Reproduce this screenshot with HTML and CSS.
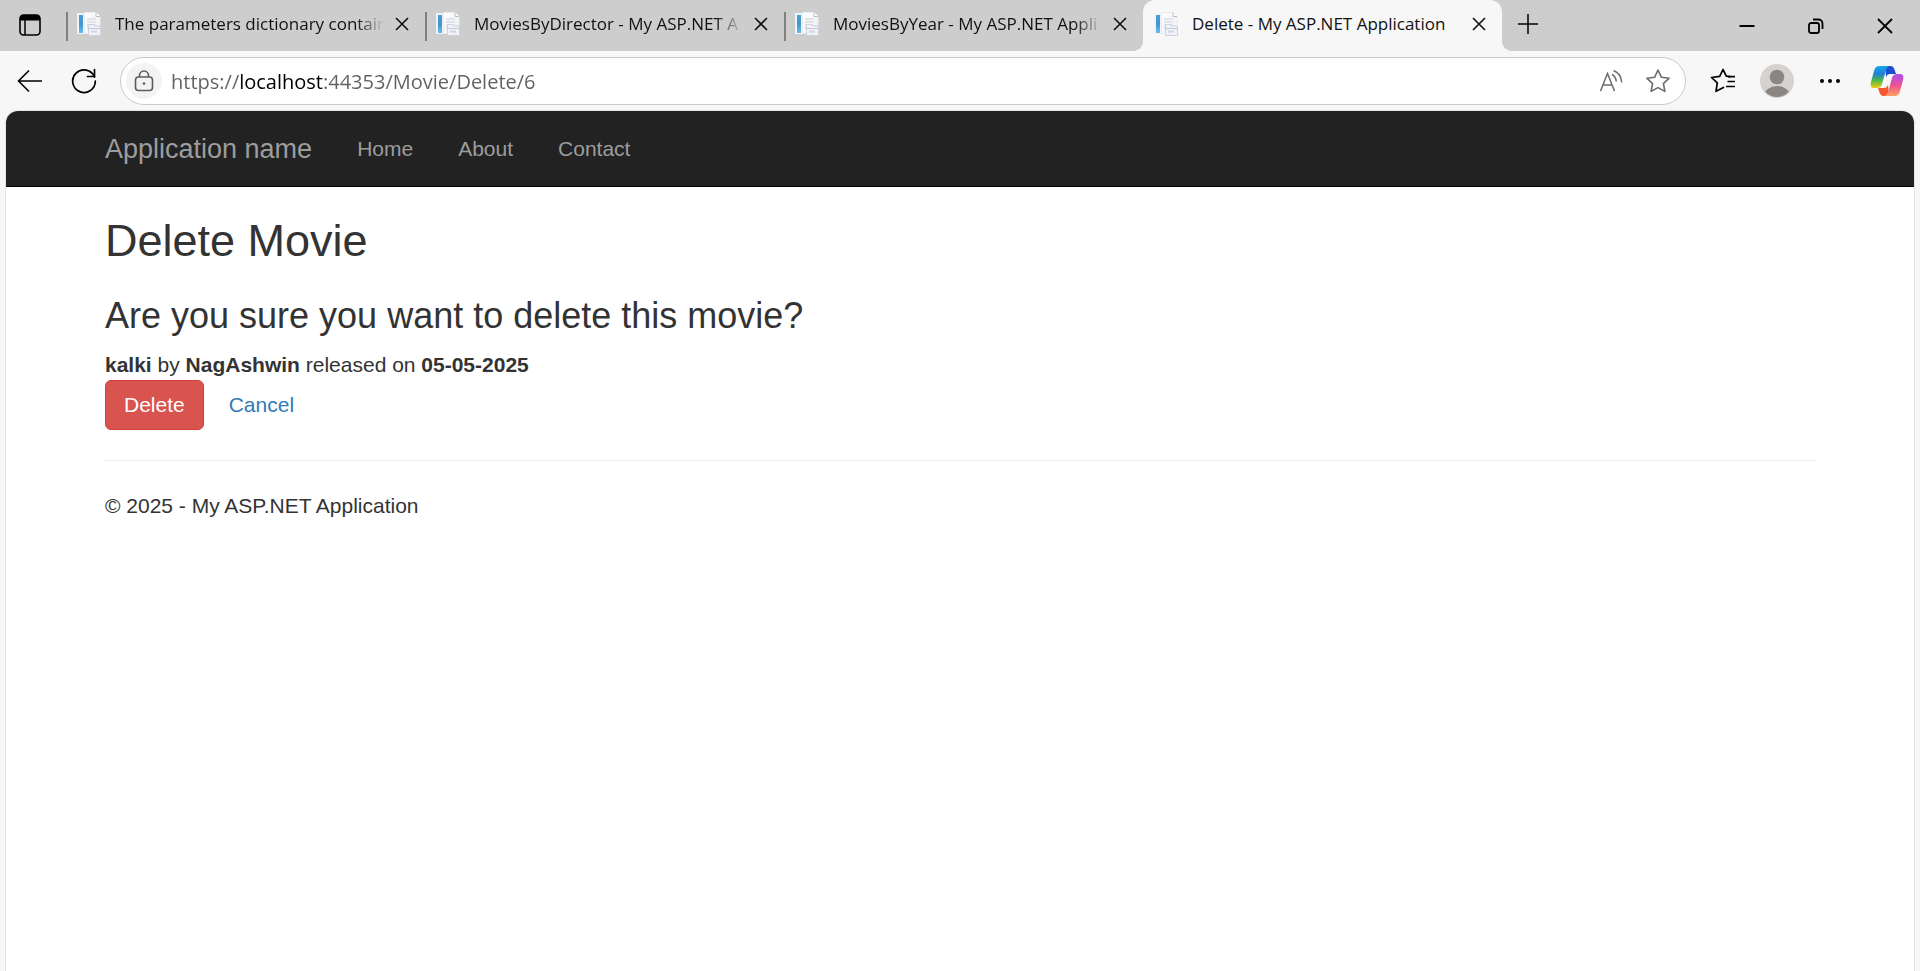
FILE: index.html
```html
<!DOCTYPE html>
<html lang="en">
<head>
<meta charset="utf-8">
<title>Delete - My ASP.NET Application</title>
<link rel="stylesheet" href="styles.css">
</head>
<body>
<svg class="defs" width="0" height="0" aria-hidden="true">
  <defs>
    <linearGradient id="blue" x1="0" y1="0" x2="0" y2="1"><stop offset="0" stop-color="#4a9fd4"/><stop offset=".5" stop-color="#3d97d0"/><stop offset="1" stop-color="#6cbcec"/></linearGradient>
    <linearGradient id="paper" x1="0" y1="0" x2="1" y2="1"><stop offset="0" stop-color="#ffffff"/><stop offset="1" stop-color="#eceef4"/></linearGradient>
    <symbol id="favicon" viewBox="0 0 24 24">
      <path d="M0 1h8v21H0z" fill="#f1f4f6"/>
      <path d="M2 3h4v18H2z" fill="url(#blue)"/>
      <path d="M7.500 .5H19l4 4V21.500H7.500z" fill="url(#paper)" stroke="#e9ebee"/>
      <path d="M19 .5V4.500h4" fill="#fff" stroke="#b9bcc2"/>
      <path d="M10 6h9v11h-9z" fill="#e0e3ea"/>
      <path d="M10 8.500h9M10 11.500h9" stroke="#f3f5f9"/>
      <path d="M11.500 14.500v-2h5l1 1.500h6v9.500h-12z" fill="#f0f2f9" stroke="#cfd2da"/>
      <path d="M11.500 16.500h12" stroke="#c4c8d4"/>
      <path d="M14 18.500h6v2h-6z" fill="#d3d7e4"/>
    </symbol>
    <symbol id="close" viewBox="0 0 14 14"><path d="M1 1l12 12M13 1L1 13" fill="none" stroke="#111" stroke-width="1.600"/></symbol>
  </defs>
</svg>

<header class="browser">
  <div class="tabstrip">
    <button class="tab-actions" aria-label="Tab actions">
      <svg width="22" height="22" viewBox="0 0 22 22"><rect x="1" y="1" width="20" height="20" rx="3.500" fill="none" stroke="#000" stroke-width="1.600"/><path d="M1 6.500V4a3 3 0 0 1 3-3h14a3 3 0 0 1 3 3v2.500z"/><path d="M6 6v15" stroke="#000" stroke-width="1.500"/></svg>
    </button>
    <div class="tab">
      <svg class="favicon"><use href="#favicon"/></svg>
      <span class="tab-title">The parameters dictionary contain</span>
      <button class="tab-close" aria-label="Close tab"><svg><use href="#close"/></svg></button>
    </div>
    <div class="tab">
      <svg class="favicon"><use href="#favicon"/></svg>
      <span class="tab-title">MoviesByDirector - My ASP.NET A</span>
      <button class="tab-close" aria-label="Close tab"><svg><use href="#close"/></svg></button>
    </div>
    <div class="tab">
      <svg class="favicon"><use href="#favicon"/></svg>
      <span class="tab-title">MoviesByYear - My ASP.NET Appli</span>
      <button class="tab-close" aria-label="Close tab"><svg><use href="#close"/></svg></button>
    </div>
    <div class="tab tab-active">
      <svg class="favicon"><use href="#favicon"/></svg>
      <span class="tab-title">Delete - My ASP.NET Application</span>
      <button class="tab-close" aria-label="Close tab"><svg><use href="#close"/></svg></button>
    </div>
    <button class="new-tab" aria-label="New tab">
      <svg width="20" height="20" viewBox="0 0 20 20"><path d="M10 0v20M0 10h20" stroke="#000" stroke-width="1.500"/></svg>
    </button>
    <div class="window-controls">
      <button aria-label="Minimize"><svg width="16" height="16" viewBox="0 0 16 16"><path d="M.5 8h15" stroke="#000" stroke-width="2"/></svg></button>
      <button aria-label="Restore"><svg width="16" height="16" viewBox="0 0 16 16" fill="none" stroke="#000" stroke-width="1.800"><rect x="1" y="5" width="10" height="10" rx="2"/><path d="M5 1.500h5.500a4 4 0 0 1 4 4V11"/></svg></button>
      <button aria-label="Close"><svg width="16" height="16" viewBox="0 0 16 16"><path d="M1 1l14 14M15 1L1 15" stroke="#000" stroke-width="1.800"/></svg></button>
    </div>
  </div>

  <div class="toolbar">
    <button class="nav-button" aria-label="Back"><svg width="26" height="24" viewBox="0 0 26 24" fill="none" stroke="#000" stroke-width="1.600"><path d="M25 12H2M12 1.500L1.500 12 12 22.500"/></svg></button>
    <button class="nav-button" aria-label="Refresh"><svg width="26" height="26" viewBox="0 0 26 26" fill="none" stroke="#000" stroke-width="1.700" stroke-linecap="round"><path d="M23.500 9A11.300 11.300 0 1 0 24.300 13"/><path d="M23.500 1.500V8.500H16.500"/></svg></button>
    <div class="address">
      <button class="site-info" aria-label="Site information"><svg width="20" height="22" viewBox="0 0 20 22" fill="none" stroke="#5c5c5c" stroke-width="1.600"><rect x="1.500" y="7" width="17" height="13.500" rx="3"/><path d="M5.500 7V5.500a4.500 4.500 0 0 1 9 0V7"/><circle cx="10" cy="13.500" r="1.300" fill="#5c5c5c" stroke="none"/></svg></button>
      <input class="url" type="text" aria-label="Address" value="https://localhost:44353/Movie/Delete/6" spellcheck="false">
      <button class="address-action" aria-label="Read aloud"><svg width="24" height="24" viewBox="0 0 24 24" fill="none" stroke="#6b6b6b" stroke-width="1.500"><path d="M1.500 22L8.500 4.500l7 17.500M4 16h9"/><path d="M13 5.500c2.600 1.300 4 3.800 4.300 7M14.500 1.500c5 2 7.800 6.500 8.200 12"/></svg></button>
      <button class="address-action" aria-label="Add to favorites"><svg width="26" height="26" viewBox="0 0 26 26" fill="none" stroke="#6b6b6b" stroke-width="1.600" stroke-linejoin="round"><path d="M13 2l3.300 7.200 7.900 1-5.800 5.400 1.500 7.800L13 19.600l-6.900 3.800 1.500-7.800L1.800 10.200l7.900-1z"/></svg></button>
    </div>
    <div class="toolbar-actions">
      <button class="favorites" aria-label="Favorites"><svg width="26" height="26" viewBox="0 0 26 26" fill="none" stroke="#000" stroke-width="1.700" stroke-linejoin="round" stroke-linecap="round"><path d="M20 8.700l-3.700-.5L13 1.500 9.700 8.400l-8.200 1.100 5.800 5.400-1.300 8.400 7.500-3.800"/><path d="M17.500 13.500h7.500M16 18.500h9M18 8.700h7" stroke-linecap="butt"/></svg></button>
      <button class="profile" aria-label="Profile"><svg width="34" height="34" viewBox="0 0 34 34"><clipPath id="round"><circle cx="17" cy="17" r="16"/></clipPath><circle cx="17" cy="17" r="17" fill="#d5d2cf"/><g fill="#8b8682" clip-path="url(#round)"><circle cx="17" cy="13" r="7.300"/><ellipse cx="17" cy="32" rx="13" ry="10"/></g></svg></button>
      <button class="more" aria-label="Settings and more"><svg width="20" height="6" viewBox="0 0 20 6"><circle cx="2" cy="3" r="2"/><circle cx="10" cy="3" r="2"/><circle cx="18" cy="3" r="2"/></svg></button>
      <button class="copilot" aria-label="Copilot"><svg width="34" height="32" viewBox="0 0 34 32">
        <defs>
          <linearGradient id="ca" x1="0" y1="0" x2="0" y2="1"><stop offset="0" stop-color="#17a6ee"/><stop offset=".35" stop-color="#1b7fd6"/><stop offset=".65" stop-color="#4cb848"/><stop offset="1" stop-color="#f2d015"/></linearGradient>
          <linearGradient id="cb" x1="0" y1="0" x2="0" y2="1"><stop offset="0" stop-color="#a84ff0"/><stop offset=".5" stop-color="#ee5095"/><stop offset="1" stop-color="#ffa05c"/></linearGradient>
        </defs>
        <path d="M15 1h5c3 0 4 1.500 5 5l1 3h-6c-2 0-3 1-4 3z" fill="#1c4fd0"/>
        <path d="M19 31h-5c-3 0-4-1.500-5-5l-1-3h6c2 0 3-1 4-3z" fill="#f4592f"/>
        <path d="M10 1h10c-2 0-3 1.500-4 4l-4 14c-1 3-2 4-5 4H4c-3 0-4-2-3-6L4 6c1-4 3-5 6-5z" fill="url(#ca)"/>
        <path d="M24 31H14c2 0 3-1.500 4-4l4-14c1-3 2-4 5-4h3c3 0 4 2 3 6l-3 11c-1 4-3 5-6 5z" fill="url(#cb)"/>
      </svg></button>
    </div>
  </div>
</header>

<div class="page">
  <nav class="navbar">
    <div class="container navbar-inner">
      <a class="brand" href="#">Application name</a>
      <a class="nav-link" href="#">Home</a>
      <a class="nav-link" href="#">About</a>
      <a class="nav-link" href="#">Contact</a>
    </div>
  </nav>
  <main class="container">
    <h2 class="title">Delete Movie</h2>
    <h3 class="question">Are you sure you want to delete this movie?</h3>
    <div class="summary"><strong>kalki</strong> by <strong>NagAshwin</strong> released on <strong>05-05-2025</strong></div>
    <form class="actions">
      <button class="btn btn-danger" type="button">Delete</button>
      <a class="btn btn-link" href="#">Cancel</a>
    </form>
    <hr class="rule">
    <footer><p class="copyright">© 2025 - My ASP.NET Application</p></footer>
  </main>
</div>
</body>
</html>
```

FILE: styles.css
```css
* { box-sizing: border-box; }

body {
  margin: 0;
  min-height: 100vh;
  display: flex;
  flex-direction: column;
  background: #f7f7f7;
  font-family: "Liberation Sans", Arial, sans-serif;
}

button {
  border: 0;
  padding: 0;
  background: none;
  font: inherit;
}

svg { display: block; }

.defs { position: absolute; }

.browser { font-family: "Open Sans", "Noto Sans", sans-serif; }

/* Tab strip */
.tabstrip {
  display: flex;
  height: 51px;
  background: #cdcdcd;
}

.tab-actions {
  flex: none;
  width: 66px;
  padding: 0 17px 2px 19px;
}

.tab {
  position: relative;
  flex: 0 1 359px;
  min-width: 0;
  display: flex;
  align-items: center;
  padding: 0 16px 3px 11px;
}

.tab:not(.tab-active)::before {
  content: "";
  position: absolute;
  left: 0;
  top: 12px;
  width: 2px;
  height: 29px;
  background: #808080;
}

.favicon {
  flex: none;
  width: 24px;
  height: 24px;
}

.tab-title {
  flex: 1;
  min-width: 0;
  margin-left: 14px;
  padding-bottom: 1px;
  overflow: hidden;
  white-space: nowrap;
  font-size: 17px;
  line-height: 24px;
  color: #111;
  mask-image: linear-gradient(to right, #000 calc(100% - 28px), transparent);
}

.tab-active .tab-title { mask-image: none; }

.tab-close {
  flex: none;
  margin-left: 11px;
}

.tab-close svg {
  width: 14px;
  height: 14px;
}

.tab-active {
  background: #f7f7f7;
  border-radius: 12px 12px 0 0;
}

.tab-active::before,
.tab-active::after {
  content: "";
  position: absolute;
  bottom: 0;
  width: 10px;
  height: 10px;
}

.tab-active::before {
  right: 100%;
  background: radial-gradient(circle at 0 0, transparent 10px, #f7f7f7 10px);
}

.tab-active::after {
  left: 100%;
  background: radial-gradient(circle at 100% 0, transparent 10px, #f7f7f7 10px);
}

.new-tab {
  flex: none;
  padding: 0 16px 4px;
}

.window-controls {
  display: flex;
  margin-left: auto;
}

.window-controls button {
  width: 69px;
  padding-left: 26px;
}

/* Toolbar */
.toolbar {
  display: flex;
  align-items: center;
  height: 60px;
  padding: 0 16px 0 17px;
}

.nav-button {
  flex: none;
  width: 54px;
}

.address {
  flex: 1;
  min-width: 0;
  display: flex;
  align-items: center;
  height: 48px;
  margin-left: -5px;
  padding: 0 14px 0 5px;
  border: 1px solid #cacaca;
  border-radius: 24px;
  background: #fff;
}

.site-info {
  flex: none;
  display: grid;
  place-items: center;
  width: 36px;
  height: 36px;
  border-radius: 50%;
  background: #f3f3f3;
}

.url {
  flex: 1;
  min-width: 0;
  margin-left: 9px;
  padding: 0;
  border: 0;
  outline: 0;
  font: 20px "Open Sans", "Noto Sans", sans-serif;
  color: transparent;
  background: linear-gradient(to right, #606060 68px, #000 68px 153px, #606060 153px);
  background-clip: text;
}

.address-action { margin-left: 22px; }

.toolbar-actions {
  flex: none;
  display: flex;
  align-items: center;
  gap: 24px;
  margin-left: 24px;
}

.more { margin-left: 2px; }

.copilot { margin-left: 6px; }

/* Web page */
.page {
  flex: 1;
  margin: 0 6px;
  overflow: hidden;
  background: #fff;
  border-radius: 12px 12px 0 0;
  box-shadow: 0 0 0 1px #e4e4e4;
  font-size: 21px;
  line-height: 30px;
  color: #333;
}

.container {
  max-width: 1754px;
  margin: 0 auto;
  padding: 0 22px;
}

.navbar {
  background: #222;
  border-bottom: 1px solid #000;
}

.navbar-inner {
  display: flex;
  align-items: center;
  gap: 45px;
  height: 75px;
}

.brand,
.nav-link {
  color: #9d9d9d;
  text-decoration: none;
}

.brand { font-size: 27px; }

.title,
.question { font-weight: 400; }

.title {
  margin: 29px 0 31px;
  font-size: 45px;
  line-height: 49px;
}

.question {
  margin: 0 0 14px;
  font-size: 36px;
  line-height: 40px;
}

.actions { display: flex; }

.btn {
  padding: 9px 18px;
  border: 1px solid transparent;
  border-radius: 6px;
  line-height: 30px;
  text-decoration: none;
}

.btn-danger {
  background: #d9534f;
  border-color: #d43f3a;
  color: #fff;
}

.btn-link {
  margin-left: 6px;
  color: #337ab7;
}

.rule {
  margin: 30px 0;
  border: 0;
  border-top: 1px solid #eee;
}

.copyright { margin: 0 0 15px; }
```
